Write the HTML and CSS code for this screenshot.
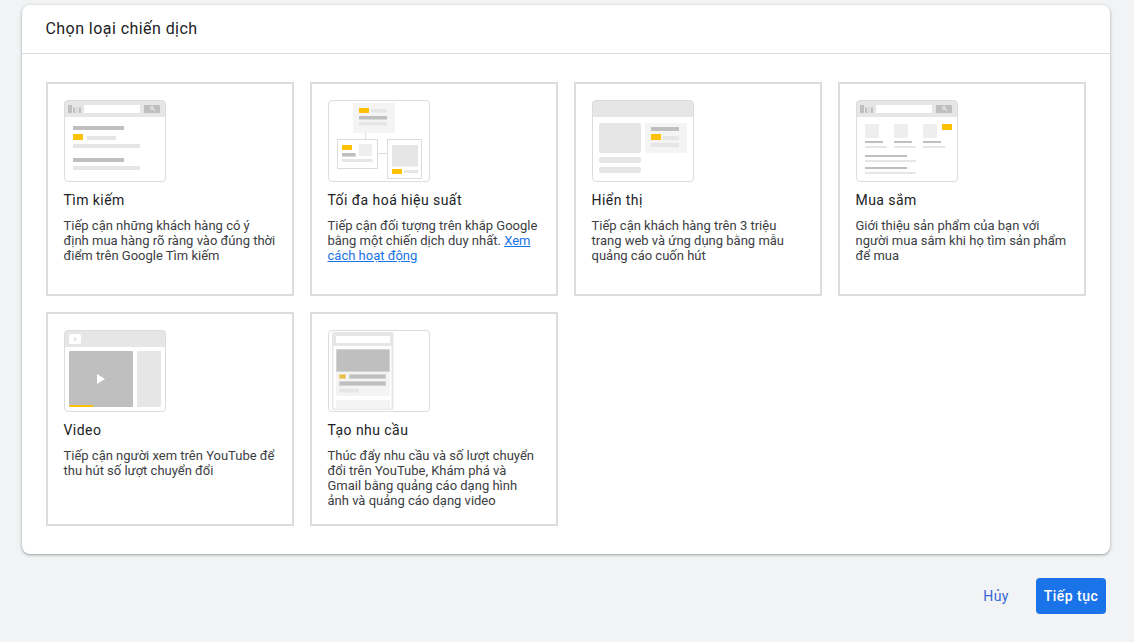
FILE: index.html
```
<!DOCTYPE html>
<html lang="vi">
<head>
<meta charset="utf-8">
<title>Chọn loại chiến dịch</title>
<link rel="stylesheet" href="styles.css">
</head>
<body>
<main class="panel">
  <header class="panel-header"><h1 class="panel-title">Chọn loại chiến dịch</h1></header>
  <section class="grid">
    <article class="card">
      <svg class="thumb" viewBox="0 0 102 82" shape-rendering="crispEdges">
        <path class="light" d="M1 1h100v16H1zM23 36h29v4H23zM9 44h67v4H9zM9 66h67v4H9z"/>
        <path class="dark" d="M4 5h4v8H4zM9 8h2v5H9zM15 8h2v5h-2zM9 26h51v4H9zM9 58h51v4H9z"/>
        <path class="mid" d="M9 7h2v1H9zM12 7h2v6h-2zM15 7h2v1h-2z"/>
        <path class="white" d="M20 5h56v8H20z"/>
        <rect class="dark" x="80" y="5" width="16" height="8" rx="1" shape-rendering="auto"/>
        <g class="lens"><circle cx="88" cy="8" r="1.5"/><path d="M89.2 9.2l2 2"/></g>
        <path class="accent" d="M9 34h10v6H9z"/>
        <rect class="frame" x=".5" y=".5" width="101" height="81" rx="3.5"/>
      </svg>
      <h2 class="card-title">Tìm kiếm</h2>
      <p class="card-text">Tiếp cận những khách hàng có ý<br>định mua hàng rõ ràng vào đúng thời<br>điểm trên Google Tìm kiếm</p>
    </article>
    <article class="card">
      <svg class="thumb" viewBox="0 0 102 82" shape-rendering="crispEdges">
        <path class="pale" d="M25 3h42v30H25z"/>
        <path class="line" d="M37 33h1v6h-1zM50 53h9v1h-9zM9 39h41v30H9zM59 39h35v40H59z"/>
        <path class="white" d="M10 40h39v28H10zM60 40h33v38H60z"/>
        <path class="soft" d="M43 11h16v2H43zM31 24h28v2H31zM31 44h13v12H31zM14 61h31v1H14zM44 59h1v3h-1zM64 66h26v1H64zM76 72h14v1H76z"/>
        <path class="light" d="M43 9h16v3H43zM31 22h28v3H31zM14 59h30v3H14zM64 45h26v21H64zM76 70h14v3H76z"/>
        <path class="mid" d="M31 19h28v1H31zM14 56h14v1H14zM27 53h1v4h-1z"/>
        <path class="dark" d="M31 16h28v3H31zM14 53h13v3H14z"/>
        <path class="accent" d="M31 8h10v5H31zM14 45h10v5H14zM64 69h10v5H64z"/>
        <rect class="frame" x=".5" y=".5" width="101" height="81" rx="3.5"/>
      </svg>
      <h2 class="card-title">Tối đa hoá hiệu suất</h2>
      <p class="card-text">Tiếp cận đối tượng trên khắp Google<br>bằng một chiến dịch duy nhất. <a class="link" href="#">Xem<br>cách hoạt động</a></p>
    </article>
    <article class="card">
      <svg class="thumb" viewBox="0 0 102 82" shape-rendering="crispEdges">
        <path class="light" d="M1 1h100v16H1z"/>
        <g class="light" shape-rendering="auto"><rect x="7" y="23" width="42" height="30" rx="2"/><rect x="7" y="57" width="42" height="6" rx="2"/><rect x="7" y="67" width="42" height="6" rx="2"/></g>
        <path class="pale" d="M53 23h42v30H53z"/>
        <path class="dark" d="M59 27h28v4H59z"/>
        <path class="light" d="M71 36h16v4H71zM59 43h28v4H59z"/>
        <path class="accent" d="M59 34h10v6H59z"/>
        <rect class="frame" x=".5" y=".5" width="101" height="81" rx="3.5"/>
      </svg>
      <h2 class="card-title">Hiển thị</h2>
      <p class="card-text">Tiếp cận khách hàng trên 3 triệu<br>trang web và ứng dụng bằng mẫu<br>quảng cáo cuốn hút</p>
    </article>
    <article class="card">
      <svg class="thumb" viewBox="0 0 102 82" shape-rendering="crispEdges">
        <path class="light" d="M1 1h100v16H1zM9 46h22v2H9zM38 46h22v2H38zM67 46h22v2H67zM9 60h51v2H9zM9 72h51v2H9z"/>
        <path class="soft" d="M9 24h14v14H9zM38 24h14v14H38zM67 24h14v14H67z"/>
        <path class="dark" d="M4 5h4v8H4zM9 8h2v5H9zM15 8h2v5h-2zM9 41h18v2H9zM38 41h18v2H38zM67 41h18v2H67zM9 55h42v2H9zM9 67h42v2H9z"/>
        <path class="mid" d="M9 7h2v1H9zM12 7h2v6h-2zM15 7h2v1h-2z"/>
        <path class="white" d="M20 5h56v8H20z"/>
        <rect class="dark" x="80" y="5" width="16" height="8" rx="1" shape-rendering="auto"/>
        <g class="lens"><circle cx="88" cy="8" r="1.5"/><path d="M89.2 9.2l2 2"/></g>
        <path class="accent" d="M86 24h10v6H86z"/>
        <rect class="frame" x=".5" y=".5" width="101" height="81" rx="3.5"/>
      </svg>
      <h2 class="card-title">Mua sắm</h2>
      <p class="card-text">Giới thiệu sản phẩm của bạn với<br>người mua sắm khi họ tìm sản phẩm<br>để mua</p>
    </article>
    <article class="card">
      <svg class="thumb" viewBox="0 0 102 82">
        <path class="light" d="M1 1h100v16H1z"/>
        <rect class="white" x="5" y="4" width="12" height="10" rx="2"/>
        <path class="light" d="M10 6.500v5l3.500-2.500z"/>
        <rect class="dark" x="5" y="21" width="64" height="56" rx="1"/>
        <rect class="light" x="73" y="21" width="24" height="56" rx="1"/>
        <path class="white" d="M33 44v10l8-5z"/>
        <path class="accent" d="M5 75h24v2H6z"/>
        <rect class="frame" x=".5" y=".5" width="101" height="81" rx="3.5"/>
      </svg>
      <h2 class="card-title">Video</h2>
      <p class="card-text">Tiếp cận người xem trên YouTube để<br>thu hút số lượt chuyển đổi</p>
    </article>
    <article class="card">
      <svg class="thumb" viewBox="0 0 102 82">
        <rect class="light" x="4" y="2" width="61.5" height="78" rx="2"/>
        <path class="white" d="M5.500 16h58v62.500h-58zM8 6h54v7H8z"/>
        <path class="pale" d="M8 42h54v24H8zM8 70h54v8.500H8z"/>
        <path class="edge" d="M8 19h54v23H8z"/>
        <path class="dark" d="M9 20h52v21H9z"/>
        <path class="edge" d="M21 44h37v5H21zM11 51h47v5H11z"/>
        <path class="dark" d="M22 45h35v3H22zM12 52h45v3H12z"/>
        <path class="light" d="M11 58.500h20v4H11z"/>
        <path class="gold-edge" d="M11 44h7v5h-7z"/>
        <path class="gold" d="M12 45h5v3h-5z"/>
        <rect class="frame" x=".5" y=".5" width="101" height="81" rx="3.5"/>
      </svg>
      <h2 class="card-title">Tạo nhu cầu</h2>
      <p class="card-text">Thúc đẩy nhu cầu và số lượt chuyển<br>đổi trên YouTube, Khám phá và<br>Gmail bằng quảng cáo dạng hình<br>ảnh và quảng cáo dạng video</p>
    </article>
  </section>
</main>
<footer class="actions">
  <button class="btn btn-text" type="button">Hủy</button>
  <button class="btn btn-primary" type="button">Tiếp tục</button>
</footer>
</body>
</html>
```
FILE: styles.css
```
* { box-sizing: border-box; }
body {
  margin: 0;
  height: 642px;
  padding: 5px 24px 0 22px;
  overflow: hidden;
  background: #f1f3f4;
  font-family: Roboto, "Noto Sans", sans-serif;
  color: #202124;
}
.panel {
  height: 549px;
  background: #fff;
  border-radius: 8px;
  box-shadow: 0 1px 2px rgba(60, 64, 67, .3), 0 1px 3px 1px rgba(60, 64, 67, .15);
}
.panel-header {
  display: flex;
  align-items: center;
  height: 49px;
  padding: 0 23.5px 2px;
  border-bottom: 1px solid #dadce0;
}
.panel-title { margin: 0; font-size: 16px; font-weight: 400; letter-spacing: .44px; }
.grid {
  display: grid;
  grid-template-columns: repeat(4, 248px);
  grid-auto-rows: 214px;
  gap: 16px;
  padding: 28px 24px;
}
.card { padding: 16px; border: 2px solid #dadce0; }
.thumb { display: block; width: 102px; height: 82px; }
.card-title {
  margin: 8px 0 0 -.5px;
  font-size: 14px;
  line-height: 20px;
  font-weight: 400;
  letter-spacing: .44px;
  white-space: nowrap;
}
.card-text {
  margin: 8px 0 0 -.5px;
  font-size: 13px;
  line-height: 15px;
  color: #3c4043;
  white-space: nowrap;
}
.link { color: #1a73e8; text-decoration: underline; }
.actions { display: flex; justify-content: flex-end; padding: 24px 4px 0 0; gap: 19px; }
.btn {
  height: 36px;
  padding: 0 8px;
  border: 0;
  border-radius: 4px;
  font-family: inherit;
  font-size: 14px;
  font-weight: 400;
  letter-spacing: .5px;
  white-space: nowrap;
}
.btn-text { background: none; color: #3367d6; }
.btn-primary { width: 70px; padding: 0; background: #1a73e8; color: #fff; font-weight: 500; }
.light { fill: #e6e6e6; }
.soft { fill: #eee; }
.pale { fill: #f4f4f4; }
.mid { fill: #d9d9d9; }
.dark { fill: #bfbfbf; }
.edge { fill: #d3d3d3; }
.line { fill: #dadce0; }
.white { fill: #fff; }
.accent { fill: #ffc107; }
.gold { fill: #e6bd43; }
.gold-edge { fill: #efd78f; }
.frame { fill: none; stroke: #dadce0; shape-rendering: auto; }
.lens { fill: none; stroke: #eee; stroke-width: 1; shape-rendering: auto; }
```
